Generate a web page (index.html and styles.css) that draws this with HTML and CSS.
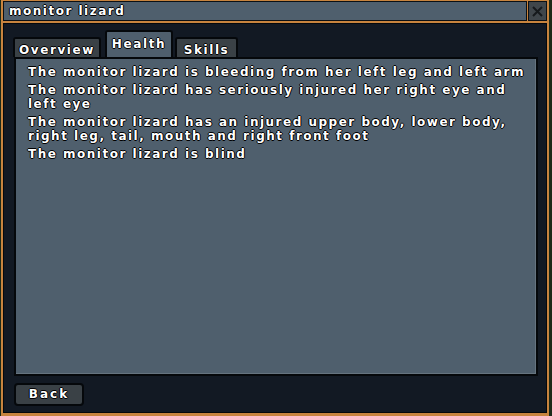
FILE: index.html
```html
<!DOCTYPE html>
<html>
<head>
<meta charset="utf-8">
<link rel="stylesheet" href="styles.css">
</head>
<body>
<div class="window">
  <div class="titlerow">
    <div class="title">monitor lizard</div>
    <div class="close">
      <svg width="17" height="17" viewBox="0 0 17 17"><path d="M4 4 L13 13 M13 4 L4 13" stroke="#16191c" stroke-width="2" fill="none"/></svg>
    </div>
  </div>
  <div class="frame">
    <div class="tabs">
      <div class="tab tab-overview">Overview</div>
      <div class="tab tab-health active">Health</div>
      <div class="tab tab-skills">Skills</div>
    </div>
    <div class="panel">
      <p>The monitor lizard is bleeding from her left leg and left arm</p>
      <p>The monitor lizard has seriously injured her right eye and left eye</p>
      <p>The monitor lizard has an injured upper body, lower body, right leg, tail, mouth and right front foot</p>
      <p>The monitor lizard is blind</p>
    </div>
    <div class="footer">
      <div class="btn">Back</div>
    </div>
  </div>
</div>
</body>
</html>
```

FILE: styles.css
```css
html, body {
  margin: 0;
  padding: 0;
  background: #1c2a18;
  width: 552px;
  height: 416px;
  overflow: hidden;
}
.window {
  margin-left: 1px;
  width: 548px;
  height: 416px;
  background: #c8843e;
  padding: 1px 2px 3px 2px;
  box-sizing: border-box;
  display: flex;
  flex-direction: column;
  gap: 2px;
  font-family: "DejaVu Sans", sans-serif;
  font-weight: bold;
  color: #fff;
}
.titlerow {
  display: flex;
  gap: 1px;
  height: 20px;
}
.title {
  flex: 1;
  background: #4f5f6d;
  border: 1px solid #0c1014;
  box-sizing: border-box;
  font-size: 12px;
  letter-spacing: 1.5px;
  line-height: 18px;
  padding-left: 5px;
  text-shadow: 1px 0 #000, -1px 0 #000, 0 1px #000, 0 -1px #000;
}
.close {
  width: 19px;
  background: #40464b;
  border: 1px solid #0c1014;
  box-sizing: border-box;
  display: flex;
  align-items: center;
  justify-content: center;
}
.frame {
  flex: 1;
  background: #121923;
  border: 1px solid #05080b;
  display: flex;
  flex-direction: column;
  padding: 7px 8px 6px 10px;
}
.tabs {
  display: flex;
  align-items: flex-end;
  height: 26px;
  margin-left: -1px;
}
.tab {
  background: #3a4146;
  border: 2px solid #05080b;
  border-bottom: none;
  border-radius: 3px 3px 0 0;
  height: 20px;
  box-sizing: border-box;
  font-size: 12px;
  letter-spacing: 1.6px;
  line-height: 18px;
  padding-top: 2px;
  text-align: center;
  text-shadow: 1px 0 #000, -1px 0 #000, 0 1px #000, 0 -1px #000;
}
.tab-overview { width: 88px; }
.tab-health { width: 68px; margin-left: 4px; }
.tab-skills { width: 63px; margin-left: 2px; }
.tab.active {
  background: #4f5f6d;
  height: 27px;
  padding-top: 3px;
}
.panel {
  flex: 1;
  background: #4f5f6d;
  border: 2px solid #05080b;
  box-shadow: inset -1px -1px 0 #66747f;
  padding: 6px 10px 6px 12px;
  font-size: 12px;
  letter-spacing: 1.5px;
  line-height: 14px;
}
.panel p {
  margin: 0 0 4px 0;
  text-shadow: 1px 0 #000, -1px 0 #000, 0 1px #000, 0 -1px #000;
}
.footer {
  padding-top: 7px;
  display: flex;
}
.btn {
  width: 70px;
  height: 23px;
  box-sizing: border-box;
  background: #3a4146;
  border: 2px solid #05080b;
  border-radius: 4px;
  text-align: center;
  font-size: 12px;
  letter-spacing: 2px;
  line-height: 19px;
  text-shadow: 1px 0 #000, -1px 0 #000, 0 1px #000, 0 -1px #000;
}
```
